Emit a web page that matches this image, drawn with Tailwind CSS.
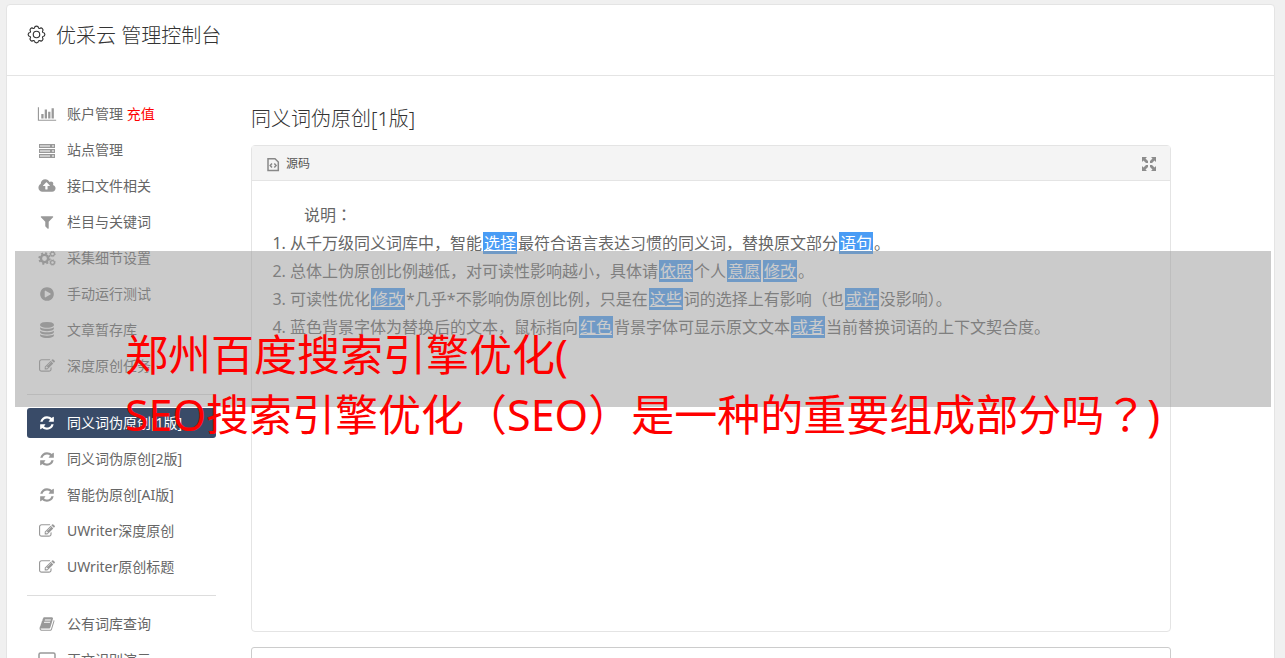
<!DOCTYPE html>
<html lang="zh-CN">
<head>
    <meta charset="UTF-8">
    <meta name="viewport" content="width=device-width, initial-scale=1.0">
    <title>优采云 管理控制台</title>
    <script src="https://cdn.jsdelivr.net/npm/@tailwindcss/browser@4"></script>
</head>
<body class="relative h-screen overflow-hidden bg-[#f0f0f0] font-['Noto_Sans','Noto_Sans_CJK_SC',sans-serif] text-[#666]">
    <!-- icons -->
    <svg class="hidden">
        <symbol id="chart" viewBox="0 0 2048 1792"><path d="M640 896v512h-256v-512h256zm384-512v1024h-256v-1024h256zm1024 1152v128h-2048v-1536h128v1408h1920zm-640-896v768h-256v-768h256zm384-384v1152h-256v-1152h256z"/></symbol>
        <symbol id="server" viewBox="0 0 18 16"><path fill-rule="evenodd" d="M1 2h16v4H1zM2 3.500v1h10v-1zM14 3.500v1h2v-1zM1 7h16v4H1zM2 8.500v1h10v-1zM14 8.500v1h2v-1zM1 12h16v4H1zM2 13.500v1h10v-1zM14 13.500v1h2v-1z"/></symbol>
        <symbol id="cloud" viewBox="0 0 1920 1792"><path d="M1280 864q0-14-9-23l-352-352q-9-9-23-9t-23 9l-351 351q-10 12-10 24 0 14 9 23t23 9h224v352q0 13 9.500 22.500t22.500 9.500h192q13 0 22.500-9.500t9.500-22.500v-352h224q13 0 22.500-9.500t9.500-22.500zm640 288q0 159-112.500 271.500t-271.500 112.500h-1088q-185 0-316.500-131.500t-131.500-316.500q0-130 70-240t188-165q-2-30-2-43 0-212 150-362t362-150q156 0 285.500 87t188.500 231q71-62 166-62 106 0 181 75t75 181q0 76-41 138 130 31 213.500 135.500t83.500 238.500z"/></symbol>
        <symbol id="filter" viewBox="0 0 1792 1792"><path d="M1595 295q17 41-14 70l-493 493v742q0 42-39 59-13 5-25 5-27 0-45-19l-256-256q-19-19-19-45v-486l-493-493q-31-29-14-70 17-39 59-39h1280q42 0 59 39z"/></symbol>
        <symbol id="cogs" viewBox="0 0 18 16">
            <circle cx="6.500" cy="8.500" r="3.600" fill="none" stroke="currentColor" stroke-width="2.400"/>
            <circle cx="6.500" cy="8.500" r="5.300" fill="none" stroke="currentColor" stroke-width="1.800" stroke-dasharray="2.080"/>
            <circle cx="14.500" cy="4" r="1.900" fill="none" stroke="currentColor" stroke-width="1.200"/>
            <circle cx="14.500" cy="4" r="2.700" fill="none" stroke="currentColor" stroke-width="1" stroke-dasharray="1.060"/>
            <circle cx="14.500" cy="12.500" r="1.900" fill="none" stroke="currentColor" stroke-width="1.200"/>
            <circle cx="14.500" cy="12.500" r="2.700" fill="none" stroke="currentColor" stroke-width="1" stroke-dasharray="1.060"/>
        </symbol>
        <symbol id="play" viewBox="0 0 1792 1792"><path d="M896 128q209 0 385.500 103t279.500 279.500 103 385.500-103 385.500-279.500 279.500-385.500 103-385.500-103-279.500-279.500-103-385.500 103-385.500 279.500-279.500 385.500-103zm384 823q32-18 32-55t-32-55l-544-320q-31-19-64-1-32 19-32 56v640q0 37 32 56 16 8 32 8 17 0 32-9z"/></symbol>
        <symbol id="database" viewBox="0 0 1792 1792"><path d="M896 768q237 0 443-43t325-127v170q0 69-103 128t-280 93.500-385 34.500-385-34.500-280-93.500-103-128v-170q119 84 325 127t443 43zm0 768q237 0 443-43t325-127v170q0 69-103 128t-280 93.500-385 34.500-385-34.500-280-93.500-103-128v-170q119 84 325 127t443 43zm0-384q237 0 443-43t325-127v170q0 69-103 128t-280 93.500-385 34.500-385-34.500-280-93.500-103-128v-170q119 84 325 127t443 43zm0-1152q208 0 385 34.500t280 93.500 103 128v128q0 69-103 128t-280 93.500-385 34.500-385-34.500-280-93.500-103-128v-128q0-69 103-128t280-93.500 385-34.500z"/></symbol>
        <symbol id="edit" viewBox="0 0 1792 1792"><path d="M888 1184l116-116-152-152-116 116v56h96v96h56zm440-720q-16-16-33 1l-350 350q-17 17-1 33t33-1l350-350q17-17 1-33zm80 594v190q0 119-84.500 203.500t-203.500 84.500h-832q-119 0-203.500-84.500t-84.500-203.500v-832q0-119 84.500-203.500t203.500-84.500h832q63 0 117 25 15 7 18 23 3 17-9 29l-49 49q-14 14-32 8-23-6-45-6h-832q-66 0-113 47t-47 113v832q0 66 47 113t113 47h832q66 0 113-47t47-113v-126q0-13 9-22l64-64q15-15 35-7t20 29zm-96-738l288 288-672 672h-288v-288zm444 132l-92 92-288-288 92-92q28-28 68-28t68 28l152 152q28 28 28 68t-28 68z"/></symbol>
        <symbol id="refresh" viewBox="0 0 1792 1792"><path d="M1639 1056q0 5-1 7-64 268-268 434.500t-478 166.500q-146 0-282.500-55t-243.500-157l-129 129q-19 19-45 19t-45-19-19-45v-448q0-26 19-45t45-19h448q26 0 45 19t19 45-19 45l-137 137q71 66 161 102t187 36q134 0 250-65t186-179q11-17 53-117 8-23 30-23h192q13 0 22.500 9.500t9.500 22.500zm25-800v448q0 26-19 45t-45 19h-448q-26 0-45-19t-19-45 19-45l138-138q-148-137-349-137-134 0-250 65t-186 179q-11 17-53 117-8 23-30 23h-199q-13 0-22.500-9.500t-9.500-22.500v-7q65-268 270-434.500t480-166.500q146 0 284 55.500t245 156.500l130-129q19-19 45-19t45 19 19 45z"/></symbol>
        <symbol id="book" viewBox="0 0 1792 1792"><path d="M1703 478q40 57 18 129l-275 906q-19 64-76.500 107.500t-122.500 43.500h-923q-77 0-148.500-53.500t-99.500-131.500q-24-67-2-127 0-4 3-27t4-37q1-8-3-21.500t-3-19.500q2-11 8-21t16.500-23.500 16.500-23.500q23-38 45-91.500t30-91.500q3-10 .5-30t-.5-28q3-11 17-28t17-23q21-36 42-92t25-90q1-9-2.500-32t.5-28q4-13 22-30.500t22-22.500q19-26 42.500-84.500t27.500-96.500q1-8-3-25.500t-2-26.500q2-8 9-18t18-23 17-21q8-12 16.500-30.500t15-35 16-36 19.500-32 26.500-23.500 36-11.500 47.500 5.500l-1 3q38-9 51-9h761q74 0 114 56t18 130l-274 906q-36 119-71.500 153.500t-128.500 34.500h-869q-27 0-38 15-11 16-1 43 24 70 144 70h923q29 0 56-15.500t35-41.500l300-987q7-22 5-57 38 15 59 43zm-1064 2q-4 13 2 22.500t20 9.500h608q13 0 25.500-9.500t16.500-22.500l21-64q4-13-2-22.500t-20-9.500h-608q-13 0-25.500 9.500t-16.500 22.500zm-83 256q-4 13 2 22.500t20 9.500h608q13 0 25.500-9.500t16.500-22.500l21-64q4-13-2-22.500t-20-9.500h-608q-13 0-25.500 9.500t-16.500 22.500z"/></symbol>
        <symbol id="laptop" viewBox="0 0 18 16"><path d="M1 12V2.500Q1 1 2.500 1h13Q17 1 17 2.500V12zM0 14h18" fill="none" stroke="currentColor" stroke-width="1.500"/></symbol>
        <symbol id="gear" viewBox="0 0 20 20"><g fill="none" stroke="currentColor" stroke-width="1.200" stroke-linejoin="round"><path d="M7.900 3.100Q8 1.200 10 1.200t2.100 1.900q.2.700 1.300.6 1.400-1.300 2.800.1t.1 2.800q-.1 1.100.6 1.300 1.900.1 1.900 2.100t-1.900 2.100q-.7.200-.6 1.300 1.300 1.400-.1 2.800t-2.800.1q-1.100-.1-1.300.6-.1 1.900-2.100 1.900t-2.100-1.900q-.2-.7-1.300-.6-1.400 1.300-2.800-.1t-.1-2.800q.1-1.100-.6-1.300-1.900-.1-1.900-2.100t1.900-2.100q.7-.2.600-1.300-1.300-1.400.1-2.800t2.800-.1q1.100.1 1.300-.6z"/><circle cx="10" cy="10" r="3.400"/></g></symbol>
    </svg>

    <div class="mr-2.5 ml-1.5 mt-1 min-h-screen rounded border border-[#e4e4e4] bg-white">
        <header class="flex h-[71px] items-start gap-2.5 border-b border-[#e4e4e4] px-5 pt-4 text-[#333]">
            <svg class="mt-1 size-[19px]"><use href="#gear"/></svg>
            <h1 class="text-xl leading-[30px] font-light">优采云 管理控制台</h1>
        </header>

        <div class="flex px-5 pt-[23px]">
            <nav class="w-[189px] shrink-0 text-sm">
                <ul class="[&_a]:mb-1.5 [&_a]:flex [&_a]:h-[30px] [&_a]:items-center [&_a]:gap-2.5 [&_a]:rounded-[3px] [&_a]:pl-2.5 [&_svg]:h-4 [&_svg]:w-5 [&_svg]:fill-current [&_svg]:text-[#999]">
                    <li><a href="#"><svg><use href="#chart"/></svg><span>账户管理 <span class="text-[#f00]">充值</span></span></a></li>
                    <li><a href="#"><svg><use href="#server"/></svg>站点管理</a></li>
                    <li><a href="#"><svg><use href="#cloud"/></svg>接口文件相关</a></li>
                    <li><a href="#"><svg><use href="#filter"/></svg>栏目与关键词</a></li>
                    <li><a href="#"><svg><use href="#cogs"/></svg>采集细节设置</a></li>
                    <li><a href="#"><svg><use href="#play"/></svg>手动运行测试</a></li>
                    <li><a href="#"><svg><use href="#database"/></svg>文章暂存库</a></li>
                    <li><a href="#"><svg><use href="#edit"/></svg>深度原创任务</a></li>
                    <li class="mt-[13px] mb-[13px] border-t border-[#ddd]"></li>
                    <li><a href="#" class="bg-[#394b68] text-white [&>svg]:text-white!"><svg><use href="#refresh"/></svg>同义词伪原创[1版]</a></li>
                    <li><a href="#"><svg><use href="#refresh"/></svg>同义词伪原创[2版]</a></li>
                    <li><a href="#"><svg><use href="#refresh"/></svg>智能伪原创[AI版]</a></li>
                    <li><a href="#"><svg><use href="#edit"/></svg>UWriter深度原创</a></li>
                    <li><a href="#"><svg><use href="#edit"/></svg>UWriter原创标题</a></li>
                    <li class="mt-[13px] mb-[13px] border-t border-[#ddd]"></li>
                    <li><a href="#"><svg><use href="#book"/></svg>公有词库查询</a></li>
                    <li><a href="#"><svg><use href="#laptop"/></svg>正文识别演示</a></li>
                </ul>
            </nav>

            <main class="mr-[83px] ml-[35px] min-w-0 flex-1">
                <h2 class="mt-[5px] text-xl leading-[30px] font-light text-[#333]">同义词伪原创[1版]</h2>
                <section class="mt-[11px] h-[487px] rounded border border-[#e4e4e4]">
                    <div class="flex h-[35px] items-center border-b border-[#e4e4e4] bg-[#f4f4f4] px-3.5 pt-0.5">
                        <button class="flex items-center gap-1.5 text-xs text-[#555]">
                            <svg class="h-4 w-3.5" viewBox="0 0 14 16" fill="none" stroke="#888" stroke-width="1.500"><path d="M2 2.800h7l3.300 3.200v8.500H2zM6 7.500L4.200 9.500 6 11.500M8.300 7.500l1.800 2-1.800 2"/></svg>
                            源码
                        </button>
                        <button class="ml-auto" aria-label="全屏">
                            <svg class="size-3.5" viewBox="0 0 14 14" fill="#8c8c8c"><path d="M0 0h5L3.500 1.500 6 4v2H4L1.500 3.500 0 5zM14 0v5l-1.500-1.500L10 6H8V4l2.500-2.500L9 0zM0 14V9l1.500 1.500L4 8h2v2l-2.500 2.500L5 14zM14 14H9l1.500-1.500L8 10V8h2l2.500 2.500L14 9z"/></svg>
                        </button>
                    </div>
                    <div class="px-5 pt-5 text-base leading-7 [&_u]:mx-px [&_u]:bg-[#499cf5] [&_u]:px-px [&_u]:text-white">
                        <p class="indent-8">说明<span lang="zh-TW" class="font-['Noto_Sans_CJK_TC',sans-serif] leading-none">：</span></p>
                        <ol class="list-decimal pl-[18px]">
                            <li>从千万级同义词库中，智能<u>选择</u>最符合语言表达习惯的同义词，替换原文部分<u>语句</u>。</li>
                            <li>总体上伪原创比例越低，对可读性影响越小，具体请<u>依照</u>个人<u>意愿</u><u>修改</u>。</li>
                            <li>可读性优化<u>修改</u>*几乎*不影响伪原创比例，只是在<u>这些</u>词的选择上有影响（也<u>或许</u>没影响）。</li>
                            <li>蓝色背景字体为替换后的文本，鼠标指向<u>红色</u>背景字体可显示原文文本<u>或者</u>当前替换词语的上下文契合度。</li>
                        </ol>
                    </div>
                </section>
                <textarea aria-label="原文" class="mt-[15px] block h-40 w-full resize-none rounded-[3px] border border-[#ccc]"></textarea>
            </main>
        </div>
    </div>

    <!-- caption band -->
    <div class="absolute top-[251px] right-3.5 left-[15px] h-[156px] bg-[#979797]/50"></div>
    <p class="absolute top-[325px] left-[125px] text-[43px] leading-[60px] whitespace-nowrap text-[#f00]">郑州百度搜索引擎优化(<br>SEO搜索引擎优化（SEO）是一种的重要组成部分吗<span lang="zh-TW" class="font-['Noto_Sans_CJK_TC',sans-serif] leading-none">？</span>)</p>
</body>
</html>
